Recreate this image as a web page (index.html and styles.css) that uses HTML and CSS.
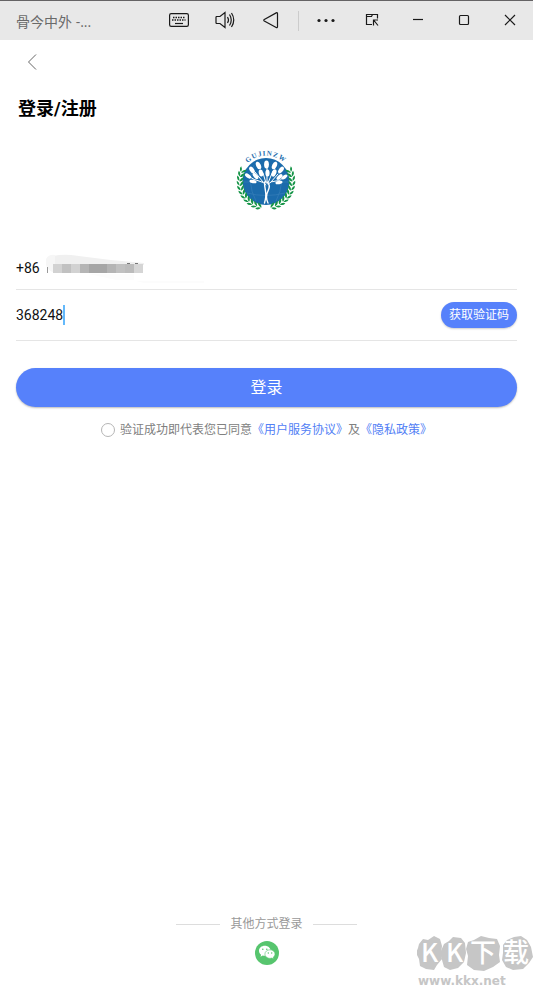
FILE: index.html
```html
<!DOCTYPE html>
<html lang="zh-CN">
<head>
<meta charset="utf-8">
<meta name="viewport" content="width=device-width, initial-scale=1">
<title>骨今中外</title>
<link rel="stylesheet" href="styles.css">
</head>
<body>
<header class="titlebar">
  <span class="app-name">骨今中外 -...</span>
  <div class="tools">
    <button type="button" aria-label="键盘">
      <svg width="24" height="20" viewBox="0 0 24 20"><rect x="2.600" y="2.600" width="18.800" height="12.800" rx="1.600"/><path d="M6 6.500h12.500M5 9h13.500" stroke-width="1.500" stroke-dasharray="1.500 1"/><path d="M8 12.500h8"/></svg>
    </button>
    <button type="button" aria-label="音量">
      <svg width="24" height="20" viewBox="0 0 24 20"><path d="M3.500 5.500h3.500l5-4v15l-5-4H3.500l-.5-.5V6zM14.500 6q2 3 0 6M16.500 3.500q3.500 5.500 0 11M18.500 2q4.500 7 0 14"/></svg>
    </button>
    <button type="button" aria-label="返回">
      <svg width="24" height="20" viewBox="0 0 24 20"><path d="M17.200 1.900q1.300-.6 1.300.8v13q0 1.400-1.300.8L5.300 10q-1-.8 0-1.600z"/></svg>
    </button>
  </div>
  <span class="divider"></span>
  <div class="tools">
    <button type="button" aria-label="更多">
      <svg class="solid" width="24" height="20" viewBox="0 0 24 20"><circle cx="5" cy="9.500" r="1.600"/><circle cx="12" cy="9.500" r="1.600"/><circle cx="19" cy="9.500" r="1.600"/></svg>
    </button>
    <button type="button" aria-label="小窗">
      <svg width="24" height="20" viewBox="0 0 24 20"><path d="M12 13.500H6.500v-10h11v4M7 5.500h4.500l1-2M13.500 14.500v-5.500H18M14 9.500l4 5"/></svg>
    </button>
    <button type="button" aria-label="最小化">
      <svg width="24" height="20" viewBox="0 0 24 20"><path d="M7 8.500h10"/></svg>
    </button>
    <button type="button" aria-label="最大化">
      <svg width="24" height="20" viewBox="0 0 24 20"><rect x="7.500" y="4.500" width="9" height="9" rx="1"/></svg>
    </button>
    <button type="button" aria-label="关闭">
      <svg width="24" height="20" viewBox="0 0 24 20"><path d="M7 4l10 10M17 4l-10 10"/></svg>
    </button>
  </div>
</header>

<main class="page">
  <button type="button" class="back" aria-label="后退">
    <svg width="12" height="18" viewBox="0 0 12 18"><path d="M10 1.500L2.500 9l7.500 7.500"/></svg>
  </button>
  <h1>登录/注册</h1>

  <svg class="logo" width="61" height="68" viewBox="0 -8 61 68" role="img" aria-label="GUJINZW">
    <defs>
      <path id="arc" d="M6 20.500A26 26 0 0 1 54 20.500"/>
      <g id="sprig"><path d="M56.500 31.500q-3.400-.4-4.400-4.600 3.600.4 4.400 4.600zM56.700 31q-.6-3.400 2-5.400 1.400 3.400-2 5.400z"/></g>
      <g id="branch">
        <use href="#sprig" transform="rotate(-22 30 30.500)"/>
        <use href="#sprig" transform="rotate(-12 30 30.500)"/>
        <use href="#sprig" transform="rotate(-2 30 30.500)"/>
        <use href="#sprig" transform="rotate(8 30 30.500)"/>
        <use href="#sprig" transform="rotate(18 30 30.500)"/>
        <use href="#sprig" transform="rotate(28 30 30.500)"/>
        <use href="#sprig" transform="rotate(38 30 30.500)"/>
        <use href="#sprig" transform="rotate(48 30 30.500)"/>
        <use href="#sprig" transform="rotate(58 30 30.500)"/>
        <use href="#sprig" transform="rotate(68 30 30.500)"/>
        <use href="#sprig" transform="rotate(78 30 30.500)"/>
      </g>
    </defs>
    <circle cx="30" cy="30.500" r="23.500" fill="#1b6bac"/>
    <path d="M7 31h46M11 42q19 5 38 0M18 14q-8 17 2 36M42 14q8 17-2 36" fill="none" stroke="#3b82bb" stroke-width=".6"/>
    <g fill="#159447"><use href="#branch"/><use href="#branch" transform="translate(60 0) scale(-1 1)"/></g>
    <g fill="none" stroke="#fff" stroke-linecap="round">
      <path d="M28.500 52q2-7 1-12t-1-9M32 52q-3-6 0-12t-1-9" stroke-width="1.400"/>
      <path d="M30 34Q28 31 23 30T14 26M32 33q3-3 8-3t7-4M30 32l-3-10M31 32V17M32 32l5-12M27 31l-8-10M35 31l7-8" stroke-width="1"/>
    </g>
    <g fill="#fff">
      <ellipse cx="30.500" cy="13.500" rx="2.400" ry="4"/>
      <ellipse cx="22.500" cy="14.500" rx="2.300" ry="4" transform="rotate(-25 22.500 14.500)"/>
      <ellipse cx="38.500" cy="14.500" rx="2.300" ry="4" transform="rotate(25 38.500 14.500)"/>
      <ellipse cx="16" cy="19" rx="2.100" ry="3.800" transform="rotate(-35 16 19)"/>
      <ellipse cx="45" cy="19" rx="2.100" ry="3.800" transform="rotate(38 45 19)"/>
      <ellipse cx="25" cy="22" rx="2.200" ry="3.600" transform="rotate(-12 25 22)"/>
      <ellipse cx="31.500" cy="22" rx="2.100" ry="3.600"/>
      <ellipse cx="38" cy="22" rx="2.200" ry="3.800" transform="rotate(22 38 22)"/>
      <ellipse cx="19.500" cy="25" rx="1.900" ry="3.700" transform="rotate(-42 19.500 25)"/>
      <ellipse cx="43.500" cy="26" rx="1.900" ry="3.700" transform="rotate(45 43.500 26)"/>
      <ellipse cx="12" cy="25" rx="1.800" ry="3.500" transform="rotate(-55 12 25)"/>
      <ellipse cx="48.500" cy="26" rx="1.700" ry="3.300" transform="rotate(55 48.500 26)"/>
      <ellipse cx="17" cy="30.500" rx="1.700" ry="3.600" transform="rotate(-80 17 30.500)"/>
      <ellipse cx="43" cy="31.500" rx="1.700" ry="3.600" transform="rotate(80 43 31.500)"/>
    </g>
    <text class="logo-text"><textPath href="#arc" startOffset="50%" text-anchor="middle">GUJINZW</textPath></text>
  </svg>

  <form class="form">
    <div class="field">
      <label for="phone">+86</label>
      <div class="phone">
        <input id="phone" type="tel">
        <svg class="mask" width="160" height="30" viewBox="0 0 160 30" aria-hidden="true">
          <path d="M1 5q6-5 24-4l40 5 33 3v2H1z" fill="#f0f0f0"/>
          <path d="M0 5q3-5 9-4v18q-7-2-9-8z" fill="#f6f6f6"/>
          <path d="M1.500 13v6" stroke="#999"/>
          <path d="M81 9.500h3M89 9.500h3" stroke="#777"/>
          <path d="M7 10h9v9H7zM25 10h9v9h-9z" fill="#d2d2d2"/>
          <path d="M16 10h9v9h-9z" fill="#c1c1c1"/>
          <path d="M34 10h9v9h-9z" fill="#b5b5b5"/>
          <path d="M43 10h18v9H43z" fill="#a6a6a6"/>
          <path d="M61 10h9v9h-9z" fill="#b4b4b4"/>
          <path d="M70 10h9v9h-9z" fill="#c0c0c0"/>
          <path d="M79 10h9v9h-9z" fill="#bbb"/>
          <path d="M88 10h9v9h-9z" fill="#d5d5d5"/>
          <path d="M43 20h45v6H70zM90 27h68v2h-60z" fill="#fcfcfc"/>
        </svg>
      </div>
    </div>
    <div class="field code-field">
      <input class="code" type="text" inputmode="numeric" value="368248" aria-label="验证码"><span class="caret"></span>
      <button type="button" class="get-code">获取验证码</button>
    </div>
    <button type="button" class="submit">登录</button>
    <div class="agree">
      <input id="agree" type="checkbox">
      <label for="agree">验证成功即代表您已同意</label><a href="#">《用户服务协议》</a><span>及</span><a href="#">《隐私政策》</a>
    </div>
  </form>

  <footer class="other">
    <div class="other-title">其他方式登录</div>
    <button type="button" class="wechat" aria-label="微信登录">
      <svg width="24" height="24" viewBox="0 0 24 24">
        <circle cx="12" cy="12" r="12" fill="#57c56e"/>
        <path d="M9.800 4.800C6.500 4.800 4 7 4 9.800c0 1.600.8 3 2.100 3.900l-.6 2 2.200-1.200c.7.200 1.400.3 2.100.3 3.300 0 5.800-2.200 5.800-5s-2.500-5-5.800-5z" fill="#fff"/>
        <path d="M15 8.800c-2.900 0-5.100 1.900-5.100 4.300s2.200 4.300 5.100 4.300c.6 0 1.200-.1 1.700-.3l1.900 1-.5-1.700c1.200-.8 1.900-2 1.900-3.300 0-2.400-2.200-4.300-5-4.300z" fill="#fff" stroke="#57c56e" stroke-width=".6"/>
        <g fill="#57c56e"><circle cx="7.800" cy="8.300" r=".8"/><circle cx="11.800" cy="8.300" r=".8"/><circle cx="13.300" cy="12" r=".7"/><circle cx="16.700" cy="12" r=".7"/></g>
      </svg>
    </button>
  </footer>
</main>

<div class="watermark">
  <svg width="116" height="50" viewBox="0 -12 116 50" aria-hidden="true">
    <g fill="#c6c6c6">
      <path d="M2 8l4-5 5 1 6-4 6 3 2 7-1 8 1 5-5 6-3 5-8-1-6-3-1-7-3-6 2-5z"/>
      <path d="M27 8l5-3 4-4 8 1 4 5 1 10-2 9-6 6-8 2-6-3-2-7-2-7z"/>
      <path d="M51 6l6-2 7-4 8 2 8 1 3 7-1 9 1 7-7 5-9 4-10-1-7-5 1-9-2-7z"/>
      <path d="M86 9l4-5 7-3 7-1 6 4 4 7 2 10-4 6-6 6-10 1-7-3-4-7 1-7z"/>
    </g>
    <g class="mark"><text x="4" y="26">K</text><text x="29" y="26">K</text><text x="53" y="26">下</text><text x="86" y="26">载</text></g>
  </svg>
  <span>www.kkx.net</span>
</div>
</body>
</html>
```
FILE: styles.css
```css
* { box-sizing: border-box; }

body {
  margin: 0;
  min-height: 100vh;
  display: flex;
  flex-direction: column;
  position: relative;
  background: #fff;
  color: #111;
  font: 14px/20px Roboto, "Noto Sans CJK SC", sans-serif;
}

button, input { font: inherit; color: inherit; }

button {
  display: flex;
  align-items: center;
  justify-content: center;
  padding: 0;
  border: 0;
  background: none;
  cursor: pointer;
}

a { color: #5280f5; text-decoration: none; }

.titlebar {
  display: flex;
  align-items: center;
  height: 40px;
  padding-left: 16px;
  border-top: 1px solid #656365;
  background: #e8e8e8;
}

.app-name {
  flex: 1;
  padding-top: 2px;
  color: #6a6a6a;
  font-family: "Open Sans", "Noto Sans CJK SC", sans-serif;
  white-space: nowrap;
}

.tools { display: flex; }
.tools button { width: 46px; height: 38px; }
.tools svg { fill: none; stroke: #1a1a1a; stroke-width: 1.2; }
.tools .solid { fill: #1a1a1a; stroke: none; }

.divider {
  width: 1px;
  height: 20px;
  margin: 0 4px;
  background: #ccc;
}

.page {
  flex: 1;
  display: flex;
  flex-direction: column;
  padding: 0 16px 23px;
}

.back {
  width: 32px;
  height: 44px;
  align-self: flex-start;
}
.back svg { fill: none; stroke: #666; stroke-width: 1; }

h1 {
  margin: 13px 2px 0;
  font-size: 18px;
  line-height: 24px;
  font-weight: 700;
  color: #000;
}

.logo { align-self: center; margin-top: 22px; }
.logo-text {
  font: 700 7px "Liberation Serif", serif;
  letter-spacing: 1px;
  fill: #1b6bac;
}

.form { margin-top: 36px; }

.field {
  display: flex;
  align-items: center;
  height: 43px;
  border-bottom: 1px solid #e5e5e5;
}
.field input {
  height: 20px;
  padding: 0;
  border: 0;
  outline: 0;
  background: none;
}

.phone { flex: 1; position: relative; margin-left: 6px; }
.phone input { width: 100%; display: block; }
.mask { position: absolute; left: 0; top: -4px; }

.code-field { height: 51px; }
.code { width: 6ch; }
.caret { width: 2px; height: 20px; background: #64b9fb; }

.get-code {
  height: 26px;
  margin-left: auto;
  padding: 0 8px;
  border-radius: 13px;
  background: #5681fb;
  box-shadow: 0 1px 2px #0003;
  color: #fff;
  font-size: 12px;
}

.submit {
  width: 100%;
  height: 39px;
  margin-top: 27px;
  border-radius: 20px;
  background: #5681fb;
  box-shadow: 0 1px 2px #0004;
  color: #fff;
  font-size: 16px;
}

.agree {
  display: flex;
  align-items: center;
  justify-content: center;
  margin-top: 13px;
  color: #808080;
  font-size: 12px;
}
.agree input {
  appearance: none;
  width: 14px;
  height: 14px;
  margin: 0 5px 0 0;
  border: 1px solid #b5b5b5;
  border-radius: 50%;
}

.other {
  display: flex;
  flex-direction: column;
  align-items: center;
  gap: 7px;
  margin-top: auto;
}
.other-title {
  display: flex;
  align-items: center;
  gap: 10px;
  color: #999;
  font-size: 12px;
}
.other-title::before,
.other-title::after {
  content: "";
  width: 44px;
  height: 1px;
  background: #ddd;
}

.watermark {
  position: absolute;
  right: 0;
  bottom: 0;
  display: flex;
  flex-direction: column;
  color: #c6c6c6;
  font: 700 12px/14px "DejaVu Sans", sans-serif;
}
.watermark span { padding-left: 1px; }
.watermark .mark {
  fill: #fff;
  font: 500 26px "Noto Sans CJK SC", sans-serif;
}
```
